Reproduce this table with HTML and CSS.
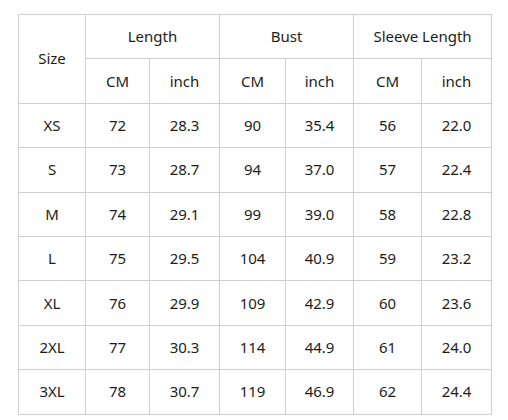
FILE: index.html
```html
<!DOCTYPE html>
<html>
<head>
<meta charset="utf-8">
<link rel="stylesheet" href="styles.css">
</head>
<body>
<table class="size-table">
  <colgroup>
    <col class="c1"><col class="c2"><col class="c3"><col class="c4"><col class="c5"><col class="c6"><col class="c7">
  </colgroup>
  <thead>
    <tr>
      <th rowspan="2">Size</th>
      <th colspan="2">Length</th>
      <th colspan="2">Bust</th>
      <th colspan="2">Sleeve Length</th>
    </tr>
    <tr>
      <th>CM</th><th>inch</th><th>CM</th><th>inch</th><th>CM</th><th>inch</th>
    </tr>
  </thead>
  <tbody>
    <tr><td>XS</td><td>72</td><td>28.3</td><td>90</td><td>35.4</td><td>56</td><td>22.0</td></tr>
    <tr><td>S</td><td>73</td><td>28.7</td><td>94</td><td>37.0</td><td>57</td><td>22.4</td></tr>
    <tr><td>M</td><td>74</td><td>29.1</td><td>99</td><td>39.0</td><td>58</td><td>22.8</td></tr>
    <tr><td>L</td><td>75</td><td>29.5</td><td>104</td><td>40.9</td><td>59</td><td>23.2</td></tr>
    <tr><td>XL</td><td>76</td><td>29.9</td><td>109</td><td>42.9</td><td>60</td><td>23.6</td></tr>
    <tr><td>2XL</td><td>77</td><td>30.3</td><td>114</td><td>44.9</td><td>61</td><td>24.0</td></tr>
    <tr><td>3XL</td><td>78</td><td>30.7</td><td>119</td><td>46.9</td><td>62</td><td>24.4</td></tr>
  </tbody>
</table>
</body>
</html>
```
FILE: styles.css
```css
html, body {
  margin: 0;
  padding: 0;
  background: #fff;
}
body {
  padding: 14px 0 0 18px;
  font-family: "Noto Sans", "Open Sans", sans-serif;
  color: #1c1c1c;
}
.size-table {
  border-collapse: collapse;
  table-layout: fixed;
  width: 474px;
}
.c1 { width: 67px; }
.c2 { width: 64px; }
.c3 { width: 70px; }
.c4 { width: 66px; }
.c5 { width: 68px; }
.c6 { width: 68px; }
.c7 { width: 70px; }
.size-table tr {
  height: 44.4px;
}
.size-table th,
.size-table td {
  border: 1px solid #cfcfcf;
  padding: 0;
  text-align: center;
  vertical-align: middle;
  font-size: 15px;
  font-weight: 400;
  line-height: 1;
}
```
